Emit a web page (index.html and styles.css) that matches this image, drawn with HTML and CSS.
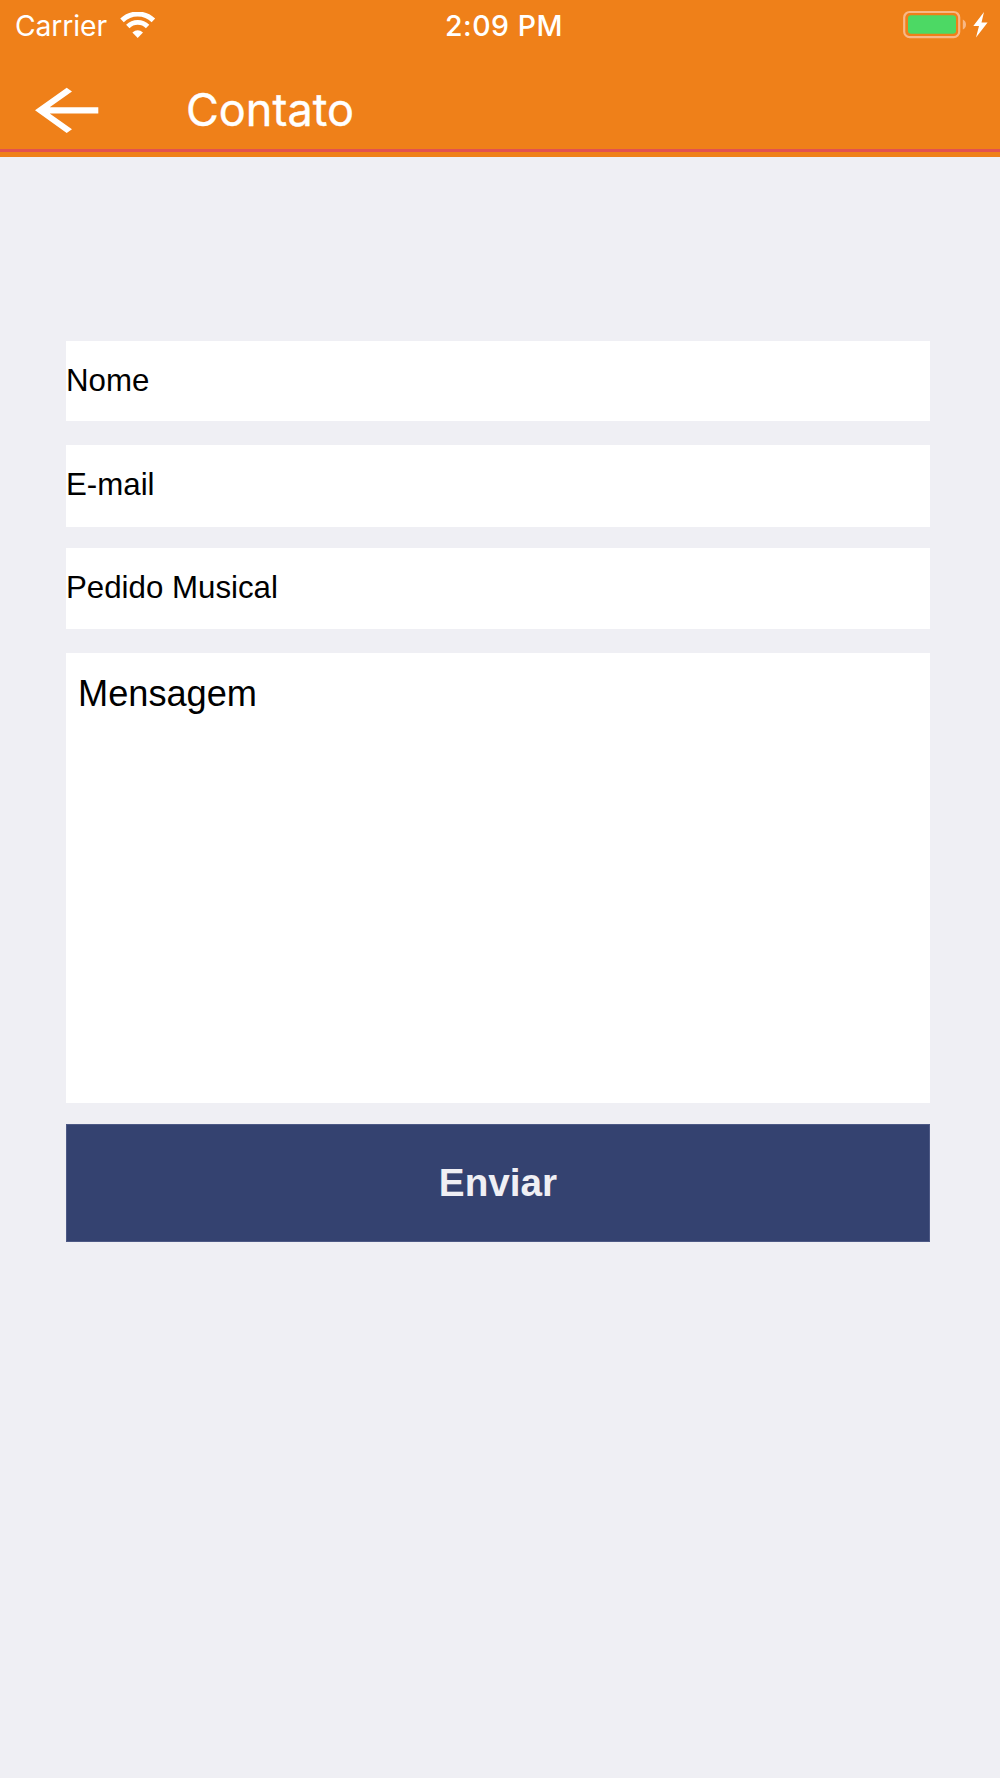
FILE: index.html
```
<!DOCTYPE html>
<html lang="pt-BR">
<head>
    <meta charset="UTF-8">
    <title>Contato</title>
    <link rel="stylesheet" href="styles.css">
</head>
<body>

    <header class="header">
        <div class="status">
            <div class="status-left">
                <span class="carrier">Carrier</span>
                <svg class="wifi" width="36" height="27" viewBox="0 0 36 27">
                    <path d="M2 8.4 A22.5 22.5 0 0 1 33.4 8.4" fill="none" stroke="#fff" stroke-width="5"/>
                    <path d="M7.8 14.5 A14 14 0 0 1 27.6 14.5" fill="none" stroke="#fff" stroke-width="4.8"/>
                    <path d="M12.4 20.4 Q17.7 16 23 20.4 L17.7 26 Z" fill="#fff"/>
                </svg>
            </div>
            <span class="time">2:09 PM</span>
            <div class="status-right">
                <svg width="90" height="30" viewBox="0 0 90 30">
                    <rect x="4.2" y="2" width="55" height="25.2" rx="5.5" fill="none" stroke="#f8b886" stroke-width="2.2"/>
                    <rect x="8" y="5.3" width="48" height="18.4" rx="3.2" fill="#4cd964"/>
                    <path d="M62.8 9.5 Q66 11 66 14.5 Q66 18 62.8 19.5 Z" fill="#f8b886"/>
                    <path d="M84 2 L73.3 16 L79 16 L76 27.5 L87.6 12.6 L81.5 12.6 Z" fill="#fff"/>
                </svg>
            </div>
        </div>

        <div class="navbar">
            <svg class="back" width="64" height="46" viewBox="0 0 64 46">
                <path d="M0 23.3 L31.7 0.7 L37 4.4 L14.7 20.3 L63.3 20.3 L63.3 26.4 L14.7 26.4 L37 42.2 L31.7 46 Z" fill="#fff"/>
            </svg>
            <h1 class="title">Contato</h1>
        </div>
        <div class="line"></div>
    </header>

    <form class="form">
        <label class="field">Nome</label>
        <label class="field field-email">E-mail</label>
        <label class="field field-pedido">Pedido Musical</label>
        <label class="field message">Mensagem</label>
        <button class="send" type="button">Enviar</button>
    </form>

</body>
</html>
```
FILE: styles.css
```
body {
    margin: 0;
    min-height: 1778px;
    font-family: "Liberation Sans", Arial, sans-serif;
    background-color: #efeff4;
}

.header {
    height: 157px;
    background-color: #ef8019;
    color: #fff;
    font-family: Inter, sans-serif;
}

.status {
    display: grid;
    grid-template-columns: 1fr auto 1fr;
    align-items: center;
    height: 50px;
    padding: 0 10px 0 15px;
}

.status-left {
    display: flex;
    align-items: center;
    gap: 13px;
}

.carrier {
    font-size: 28.3px;
    font-weight: 400;
    letter-spacing: -0.1px;
}

.time {
    padding-left: 3px;
    font-size: 28.5px;
    font-weight: 500;
    letter-spacing: 0.5px;
}

.carrier,
.time {
    padding-top: 1px;
}

.status-right {
    display: flex;
    justify-content: flex-end;
}

.navbar {
    display: flex;
    align-items: center;
    box-sizing: border-box;
    height: 99px;
    padding: 20px 0 0 35px;
}

.title {
    margin: -1px 0 0 87px;
    font-size: 45px;
    font-weight: 400;
    -webkit-text-stroke: 0.4px #fff;
}

.line {
    height: 3px;
    background-color: #e2524f;
}

.form {
    display: flex;
    flex-direction: column;
    margin: 184px 70px 0 66px;
}

.field {
    height: 80px;
    margin-bottom: 24px;
    font-size: 31.25px;
    line-height: 79px;
    background-color: #fff;
    color: #000;
}

.field-email {
    height: 82px;
    margin-bottom: 21px;
}

.field-pedido {
    height: 81px;
    line-height: 80px;
}

.message {
    box-sizing: border-box;
    height: 450px;
    margin-bottom: 21px;
    padding-left: 12px;
    font-size: 36.2px;
    line-height: 81px;
}

.send {
    height: 118px;
    padding: 0;
    border: 1px solid #4d5985;
    background-color: #344270;
    color: #efeff4;
    font-family: inherit;
    font-size: 38.7px;
    font-weight: bold;
}
```
